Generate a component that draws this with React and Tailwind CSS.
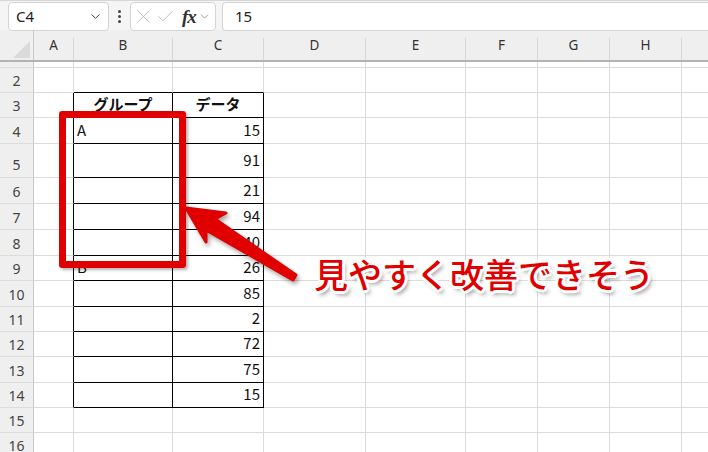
import React from "react";
import { ChevronDown, X, Check } from "lucide-react";

const cols = [
  { k: "A", w: "w-[40px]" },
  { k: "B", w: "w-[99px]" },
  { k: "C", w: "w-[91px]" },
  { k: "D", w: "w-[102px]" },
  { k: "E", w: "w-[100px]" },
  { k: "F", w: "w-[72px]" },
  { k: "G", w: "w-[72px]" },
  { k: "H", w: "w-[72px]" },
  { k: "", w: "w-[72px]" },
];

const rows = [
  { n: 1, h: "h-[6px]", hide: true },
  { n: 2, h: "h-[25px]" },
  { n: 3, h: "h-[25px]", b: "グループ", c: "データ", head: true },
  { n: 4, h: "h-[26px]", b: "A", c: "15" },
  { n: 5, h: "h-[34px]", c: "91", tall: true },
  { n: 6, h: "h-[26px]", c: "21" },
  { n: 7, h: "h-[26px]", c: "94" },
  { n: 8, h: "h-[26px]", c: "40" },
  { n: 9, h: "h-[25px]", b: "B", c: "26" },
  { n: 10, h: "h-[26px]", c: "85" },
  { n: 11, h: "h-[25px]", c: "2" },
  { n: 12, h: "h-[25px]", c: "72" },
  { n: 13, h: "h-[26px]", c: "75" },
  { n: 14, h: "h-[25px]", c: "15" },
  { n: 15, h: "h-[25px]" },
  { n: 16, h: "h-[25px]" },
];

function Cell({ row, col }) {
  const inTable = row.n >= 3 && row.n <= 14;
  const rBlack = inTable && (col.k === "A" || col.k === "B" || col.k === "C");
  const bBlack = row.n >= 2 && row.n <= 14 && (col.k === "B" || col.k === "C");
  const rc = rBlack ? "border-r-black" : "border-r-[#dcdcdc]";
  const bc = bBlack ? "border-b-black" : "border-b-[#dcdcdc]";
  let content = null;
  let align = "justify-start pl-[3px]";
  if (col.k === "B" && row.b) {
    content = row.b;
    align = row.head ? "justify-center font-bold" : "justify-start pl-[3px]";
  }
  if (col.k === "C" && row.c) {
    content = row.c;
    align = row.head ? "justify-center font-bold" : "justify-end pr-[3px]";
  }
  const pb = row.tall ? "pb-[7px]" : "pb-[3px]";
  return (
    <div
      className={`${col.w} ${row.h} shrink-0 flex items-end ${align} ${pb} border-r border-b ${rc} ${bc} overflow-hidden text-[15px] leading-[20px] text-[#111]`}
    >
      {content}
    </div>
  );
}

export default function App() {
  return (
    <div
      className="relative w-[708px] h-[452px] overflow-hidden bg-white"
      style={{ fontFamily: '"Noto Sans CJK JP", "Noto Sans", sans-serif' }}
    >
      {/* toolbar */}
      <div className="h-[30px] bg-[#f5f5f5] flex items-stretch pt-px gap-0 border-t border-[#d6d6d6]">
        <div className="ml-[8px] w-[101px] h-[29px] bg-white border border-[#d4d4d4] rounded-[4px] flex items-center justify-between pl-[7px] pr-[5px]">
          <span className="text-[15px] text-[#222] font-['Noto_Sans',sans-serif]">C4</span>
          <ChevronDown size={15} strokeWidth={1.6} color="#444" />
        </div>
        <div className="w-[21px] flex flex-col items-center justify-center gap-[2px]">
          <span className="w-[3px] h-[3px] rounded-full bg-[#444]" />
          <span className="w-[3px] h-[3px] rounded-full bg-[#444]" />
          <span className="w-[3px] h-[3px] rounded-full bg-[#444]" />
        </div>
        <div className="w-[86px] h-[29px] bg-white border border-[#d4d4d4] rounded-[4px] flex items-center pl-[1px] pr-[2px] gap-0">
          <X size={23} strokeWidth={0.9} color="#b5b5b5" />
          <Check size={21} strokeWidth={0.95} color="#b5b5b5" />
          <span className="ml-[6px] text-[19px] italic font-bold text-[#333] leading-none font-['Liberation_Serif',serif] tracking-[-1px]">fx</span>
          <span className="ml-[2px]">
            <ChevronDown size={13} strokeWidth={1.3} color="#777" />
          </span>
        </div>
        <div className="ml-[6px] flex-1 h-[29px] bg-white border border-[#d4d4d4] border-r-0 rounded-l-[4px] flex items-center pl-[12px]">
          <span className="text-[15px] text-[#222] font-['Noto_Sans',sans-serif]">15</span>
        </div>
      </div>

      {/* column header */}
      <div className="h-[32px] flex bg-[#efefef] border-b-2 border-[#b3b3b3]">
        <div className="w-[34px] shrink-0 relative border-r border-[#c8c8c8]">
          <svg className="absolute left-[13px] top-[11px]" width="17" height="17" viewBox="0 0 17 17">
            <polygon points="17,0 17,17 0,17" fill="#dadada" />
          </svg>
        </div>
        {cols.map((c, i) => (
          <div key={i} className={`${c.w} shrink-0 flex items-end`}>
            <div className="flex-1 h-full flex items-center justify-center text-[13.5px] text-[#333] font-['Noto_Sans',sans-serif] pt-[1px]">
              {c.k}
            </div>
            <div className="w-px h-[22px] bg-[#d6d6d6]" />
          </div>
        ))}
      </div>

      {/* body rows */}
      {rows.map((r) => (
        <div key={r.n} className="flex">
          <div
            className={`w-[34px] ${r.h} shrink-0 bg-[#efefef] border-r border-r-[#c8c8c8] border-b border-b-[#dcdcdc] flex items-end justify-center ${r.tall ? "pb-[3px]" : "pb-[2px]"} overflow-hidden text-[14px] leading-[18px] text-[#444] font-['Noto_Sans',sans-serif]`}
          >
            {r.hide ? null : r.n}
          </div>
          {cols.map((c, i) => (
            <Cell key={i} row={r} col={c} />
          ))}
        </div>
      ))}

      {/* red rectangle */}
      <div className="absolute left-[59px] top-[111px] w-[127px] h-[157px] border-[7px] border-[#e00000] rounded-[3px] shadow-[2px_2px_3px_rgba(0,0,0,0.3)]" />

      {/* arrow */}
      <svg
        className="absolute left-0 top-0 pointer-events-none"
        width="708"
        height="452"
        style={{ filter: "drop-shadow(2px 3px 2px rgba(0,0,0,0.35))" }}
      >
        <polygon
          points="186,208 226,213 215,219 296,275 293,280 206,230 206,242"
          fill="#e00000"
          stroke="#e00000"
          strokeWidth="3"
          strokeLinejoin="round"
        />
      </svg>

      {/* annotation text */}
      <div className="absolute left-[314px] top-[257px] text-[34px] leading-none font-medium text-[#e00000] whitespace-nowrap [text-shadow:2px_0_0_#fff,-2px_0_0_#fff,0_2px_0_#fff,0_-2px_0_#fff,2px_2px_0_#fff,-2px_-2px_0_#fff,2px_-2px_0_#fff,-2px_2px_0_#fff,3px_0_0_#fff,0_3px_0_#fff,-3px_0_0_#fff,0_-3px_0_#fff,3px_4px_4px_rgba(0,0,0,0.45)]">
        見やすく改善できそう
      </div>
    </div>
  );
}
